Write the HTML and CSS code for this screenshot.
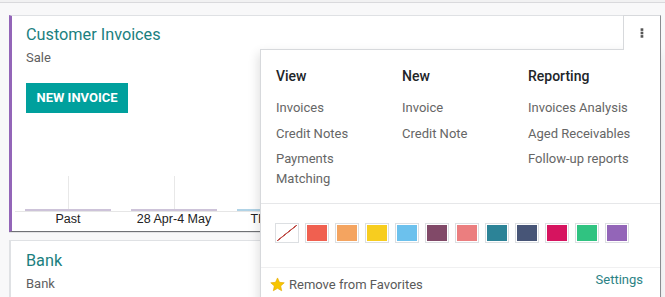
FILE: index.html
```html
<!DOCTYPE html>
<html lang="en">
<head>
<meta charset="utf-8">
<title>Accounting Dashboard</title>
<link rel="stylesheet" href="styles.css">
</head>
<body>
<div class="topbar"></div>
<main class="dashboard">
  <section class="card card-purple">
    <div class="card-head">
      <div class="title">Customer Invoices</div>
      <div class="subtitle">Sale</div>
    </div>
    <div class="actions"><a class="btn">New Invoice</a></div>
    <div class="chart">
      <div class="plot">
        <div class="col"><span class="bar past"></span></div>
        <div class="col"><span class="bar past"></span></div>
        <div class="col"><span class="bar now"></span></div>
        <div class="col"><span class="bar now"></span></div>
        <div class="col"><span class="bar now"></span></div>
        <div class="col"><span class="bar now"></span></div>
      </div>
      <div class="labels">
        <span>Past</span>
        <span>28 Apr-4 May</span>
        <span>This Week</span>
        <span>12-18 May</span>
        <span>19-25 May</span>
        <span>Future</span>
      </div>
    </div>

    <button class="toggle" aria-label="Manage">
      <svg width="4" height="10" viewBox="0 0 4 10"><rect x="0.6" y="0.3" width="2.7" height="2.6" fill="#555"/><rect x="0.6" y="3.7" width="2.7" height="2.6" fill="#555"/><rect x="0.6" y="7.1" width="2.7" height="2.6" fill="#555"/></svg>
    </button>
    <div class="menu">
      <div class="menu-cols">
        <div class="mcol">
          <div class="mtitle">View</div>
          <a class="mitem">Invoices</a>
          <a class="mitem">Credit Notes</a>
          <a class="mitem">Payments Matching</a>
        </div>
        <div class="mcol">
          <div class="mtitle">New</div>
          <a class="mitem">Invoice</a>
          <a class="mitem">Credit Note</a>
        </div>
        <div class="mcol">
          <div class="mtitle">Reporting</div>
          <a class="mitem">Invoices Analysis</a>
          <a class="mitem">Aged Receivables</a>
          <a class="mitem">Follow-up reports</a>
        </div>
      </div>
      <ul class="colors">
        <li class="sw c0"></li>
        <li class="sw c1"></li>
        <li class="sw c2"></li>
        <li class="sw c3"></li>
        <li class="sw c4"></li>
        <li class="sw c5"></li>
        <li class="sw c6"></li>
        <li class="sw c7"></li>
        <li class="sw c8"></li>
        <li class="sw c9"></li>
        <li class="sw c10"></li>
        <li class="sw c11"></li>
      </ul>
      <div class="menu-foot">
        <a class="fav">
          <svg width="15" height="15" viewBox="0 0 24 24"><path d="M12 1.5l3.2 7 7.6.8-5.7 5.1 1.6 7.6L12 18.1 5.3 22l1.6-7.6L1.2 9.3l7.6-.8z" fill="#f7c600" stroke="#e3a900" stroke-width="1" stroke-linejoin="round"/></svg>
          <span>Remove from Favorites</span>
        </a>
        <a class="settings">Settings</a>
      </div>
    </div>
  </section>

  <section class="card card-bank">
    <div class="card-head">
      <div class="title">Bank</div>
      <div class="subtitle">Bank</div>
    </div>
  </section>
</main>
</body>
</html>
```

FILE: styles.css
```css
html, body {
  margin: 0;
  padding: 0;
  overflow: hidden;
}
body {
  background: #f8f8f9;
  font-family: Roboto, "Noto Sans", sans-serif;
  font-size: 13px;
  color: #4c4c4c;
}
.topbar {
  height: 2px;
  background: #f1f1f2;
  border-bottom: 1px solid #d9d9dc;
}
.dashboard {
  padding: 12px 4px 0 9px;
}
.card {
  position: relative;
  background: #fff;
  border: 1px solid #dfe1e4;
}
.card-purple {
  border-left: 3px solid #9365b8;
  border-bottom: 1px solid #6f7175;
  box-shadow: 0 1px 0 #e2e2e4;
}
.card-bank {
  margin-top: 8px;
  height: 80px;
  border-left-width: 2px;
}
.card-head {
  padding: 9px 14px 0;
}
.card-bank .card-head {
  padding: 10px 15px 0;
}
.title {
  font-size: 16.25px;
  line-height: 19.5px;
  color: #1b7f80;
}
.subtitle {
  margin-top: 3px;
  font-size: 13px;
  line-height: 19.5px;
  color: #5f5f5f;
}
.actions {
  padding: 16px 14px 0;
}
.btn {
  display: inline-block;
  height: 30px;
  line-height: 30px;
  padding: 0 10.5px;
  background: #00a09d;
  color: #fff;
  font-weight: 700;
  font-size: 13px;
  text-transform: uppercase;
}
.chart {
  height: 118px;
  padding-top: 63px;
  box-sizing: border-box;
  margin-left: 3px;
  font-family: "Liberation Sans", Arial, sans-serif;
}
.plot {
  display: flex;
  height: 35px;
  border-bottom: 1px solid #e6e6e6;
}
.col {
  width: 106px;
  flex: none;
  display: flex;
  align-items: flex-end;
  padding: 0 10px;
  box-sizing: border-box;
  background-image: linear-gradient(#e8e8e8, #e8e8e8);
  background-size: 1px 100%;
  background-position: 53px 0;
  background-repeat: no-repeat;
}
.bar {
  display: block;
  flex: 1;
  height: 2px;
}
.bar.past { background: #cdc3d9; }
.bar.now { background: #b1d3e6; }
.labels {
  display: flex;
  height: 19px;
}
.labels span {
  width: 106px;
  flex: none;
  text-align: center;
  font-size: 12.5px;
  line-height: 13px;
  color: #222;
  padding-top: 1px;
}

/* manage dropdown */
.toggle {
  position: absolute;
  top: -1px;
  right: -1px;
  width: 38px;
  height: 35px;
  box-sizing: border-box;
  margin: 0;
  padding: 12px 0 0;
  background: #fff;
  border: 1px solid #d7d9dc;
  border-bottom: 0;
  border-right-color: #8a8c90;
  z-index: 3;
  display: flex;
  justify-content: center;
  align-items: flex-start;
}
.menu {
  position: absolute;
  top: 33px;
  left: 248px;
  right: -1px;
  background: #fff;
  border: 1px solid #d7d9dc;
  border-right-color: #8a8c90;
  box-shadow: -2px 4px 10px rgba(0, 0, 0, 0.12);
  z-index: 2;
}
.menu-cols {
  display: flex;
  padding: 18px 0 11.5px 15px;
}
.mcol {
  width: 126px;
  padding-right: 16px;
  box-sizing: border-box;
  flex: none;
}
.mtitle {
  font-size: 14px;
  line-height: 17px;
  font-weight: 500;
  color: #212529;
  margin-bottom: 10px;
}
.mitem {
  display: block;
  padding: 3px 0;
  line-height: 19.5px;
  font-size: 13px;
  color: #666;
}
.colors {
  list-style: none;
  margin: 0;
  padding: 20px 0 25px 15px;
  border-top: 1px solid #e6e7e9;
  display: flex;
  gap: 8px;
}
.sw {
  width: 20px;
  height: 16px;
  border: 1px solid #fff;
  box-shadow: 0 0 0 1px #dcdfe2;
}
.c0 {
  background: linear-gradient(to bottom right, #fff calc(50% - 0.8px), #c0504a calc(50% - 0.4px), #c0504a calc(50% + 0.4px), #fff calc(50% + 0.8px));
}
.c1 { background: #f06050; }
.c2 { background: #f4a460; }
.c3 { background: #f7cd1f; }
.c4 { background: #6cc1ed; }
.c5 { background: #814968; }
.c6 { background: #eb7e7f; }
.c7 { background: #2c8397; }
.c8 { background: #475577; }
.c9 { background: #d6145f; }
.c10 { background: #30c381; }
.c11 { background: #9365b8; }
.menu-foot {
  border-top: 1px solid #f0f0f1;
  display: flex;
  justify-content: space-between;
  align-items: flex-start;
  padding: 0 17px 14px 9px;
}
.fav {
  margin-top: 7px;
  display: flex;
  align-items: center;
  gap: 4px;
  line-height: 19.5px;
  color: #5a5a5a;
}
.fav svg {
  flex: none;
}
.settings {
  margin-top: 2px;
  line-height: 19.5px;
  color: #2b8285;
}
```
